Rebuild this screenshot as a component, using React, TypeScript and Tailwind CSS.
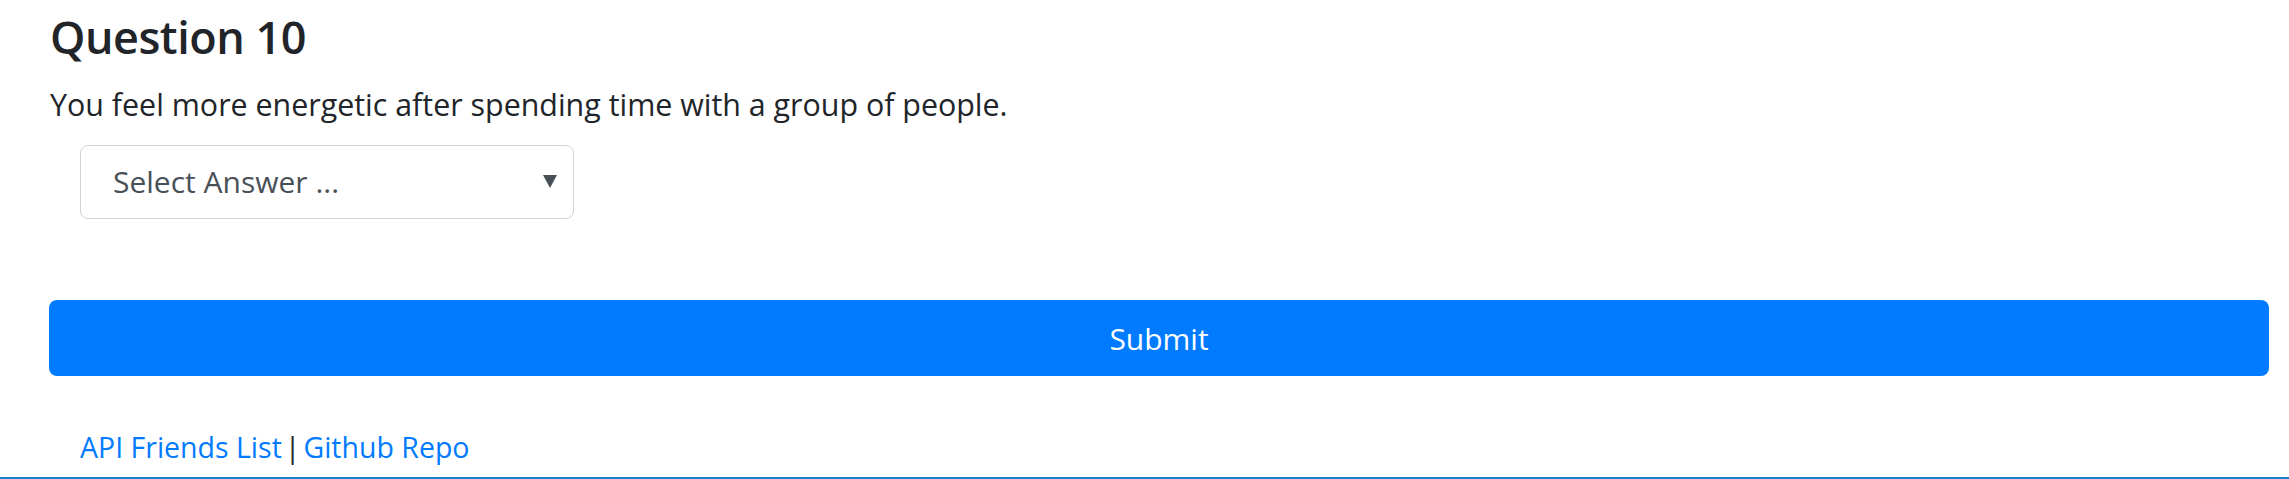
import React from "react";

export default function App() {
  const font = { fontFamily: '"Open Sans", "Noto Sans", sans-serif' };
  return (
    <div className="w-[2289px] h-[479px] bg-white overflow-hidden flex flex-col text-[#212529]" style={font}>
      <div className="flex flex-col pl-[49px] pr-[20px]">
        <h2 className="mt-[10px] text-[45px] leading-[54px] font-semibold pl-[1px] tracking-[-0.5px]">Question 10</h2>
        <p className="mt-[21px] text-[30.4px] leading-[40px] pl-[1px]">
          You feel more energetic after spending time with a group of people.
        </p>
        <div className="ml-[31px] mt-[20px] w-[494px] h-[74px] border border-[#ced4da] rounded-[8px] flex items-center justify-between pl-[32px] pr-[16px] text-[#495057]">
          <span className="text-[30px] leading-[40px]">Select Answer ...</span>
          <svg width="14" height="13" viewBox="0 0 14 13" className="mb-[2px]">
            <polygon points="0,0 14,0 7,13" fill="#495057" />
          </svg>
        </div>
        <button className="mt-[81px] h-[76px] w-full bg-[#007bff] rounded-[8px] text-white text-[30px] leading-[40px] flex items-center justify-center pt-[2px]">
          Submit
        </button>
        <div className="mt-[51px] ml-[31px] text-[28.5px] leading-[40px] flex items-baseline">
          <a className="text-[#007bff]">API Friends List</a>
          <span className="ml-[3px] mr-[3px]">|</span>
          <a className="text-[#007bff]">Github Repo</a>
        </div>
      </div>
      <div className="mt-auto h-[2px] w-full bg-[#1a7fd0]" />
    </div>
  );
}
